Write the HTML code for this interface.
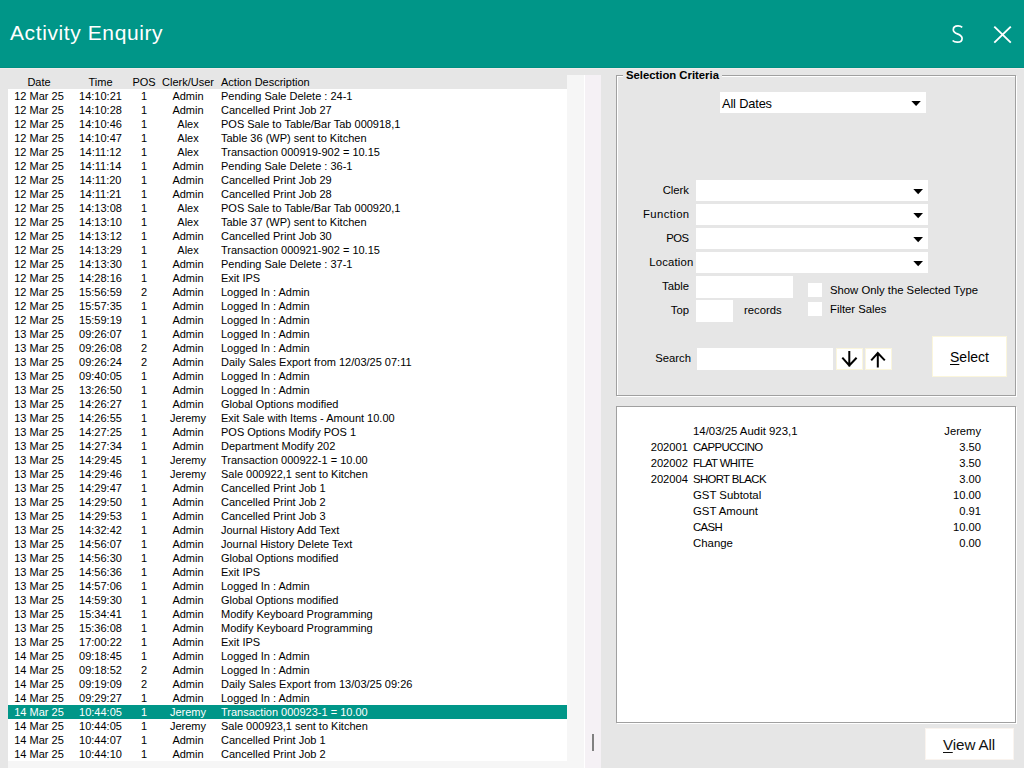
<!DOCTYPE html>
<html><head><meta charset="utf-8">
<style>
*{margin:0;padding:0;box-sizing:border-box}
html,body{width:1024px;height:768px;overflow:hidden;background:#e6e6e6;font-family:"Liberation Sans",sans-serif;color:#000;position:relative}
.abs{position:absolute}
#title{position:absolute;left:0;top:0;width:1024px;height:68px;background:#009688}
#title .t{position:absolute;left:10px;top:17.5px;font-size:21px;letter-spacing:0.6px;line-height:30px;color:#fff;white-space:nowrap}
#tline{position:absolute;left:0;top:67px;width:1024px;height:1px;background:#008f82}
#wline{position:absolute;left:0;top:68px;width:1024px;height:1px;background:#f3eaea}
#vsw{position:absolute;left:584px;top:75px;width:1px;height:693px;background:#fff}
#hdr{position:absolute;left:8px;top:75px;width:559px;height:14px;font-size:11px;line-height:14px;white-space:nowrap}
#list{position:absolute;left:8px;top:89px;width:559px;height:672px;background:#fff;overflow:hidden}
.r{position:absolute;left:0;width:559px;height:14px;font-size:11px;line-height:14px;white-space:nowrap}
.r span,#hdr span{position:absolute;top:0}
.cd{left:0;width:62px;text-align:center}
.ct{left:62px;width:61px;text-align:center}
.cp{left:123px;width:26px;text-align:center}
.cc{left:149px;width:62px;text-align:center}
.ca{left:213px}
.sel{background:#009688;color:#fff}
#vs1{position:absolute;left:567px;top:75px;width:17px;height:693px;background:#f6f6f6}
#vs2{position:absolute;left:585px;top:75px;width:16px;height:693px;background:#f5f1f5}
#hsb{position:absolute;left:8px;top:761px;width:559px;height:7px;background:#f6f6f6}
#thumb{position:absolute;left:592px;top:734px;width:2px;height:17px;background:#808080}
.grp{position:absolute;border:1px solid #a0a0a0;box-shadow:inset 1px 1px 0 #fff, 1px 1px 0 #fff}
.glabel{position:absolute;left:623px;top:69px;padding:0 3px;background:#e6e6e6;font-weight:bold;font-size:11.3px;line-height:13px;white-space:nowrap}
.box{position:absolute;background:#fff}
.tri{position:absolute;width:0;height:0;border-left:5px solid transparent;border-right:5px solid transparent;border-top:6px solid #000}
.lbl{position:absolute;font-size:11.3px;line-height:21px;white-space:nowrap;text-align:right}
.btn{position:absolute;background:#fff;border:1px solid #fbf6dc}
u{text-decoration-thickness:1px;text-underline-offset:2px}
.rc{position:absolute;left:617px;width:398px;height:16px;font-size:11.2px;line-height:16px;white-space:nowrap}
.rc span{position:absolute;top:0}
.rc1{left:0;width:71px;text-align:right}
.rc2{left:76px;font-size:11.4px}
.rc3{right:34px;text-align:right}
</style></head><body>
<div id="title"><div class="t">Activity Enquiry</div>
<svg class="abs" style="left:952px;top:25px" width="12" height="19" viewBox="0 0 12 19"><path d="M10.2 2.4 C9.2 1.4 7.8 0.9 6 0.9 C3.2 0.9 1.3 2.4 1.3 4.7 C1.3 6.9 2.9 7.9 5.4 8.9 C8.4 10.1 10.1 11.2 10.1 13.5 C10.1 15.8 8.1 17.2 5.3 17.2 C3.3 17.2 1.6 16.5 0.6 15.5" stroke="#fff" stroke-width="1.7" fill="none"/></svg>
<svg class="abs" style="left:990px;top:23px" width="24" height="23" viewBox="0 0 24 23"><path d="M4.3 3.6 L20.8 19.6 M20.8 3.6 L4.3 19.6" stroke="#fff" stroke-width="1.9" fill="none"/></svg>
</div>
<div id="hdr"><span class="cd">Date</span><span class="ct">Time</span><span class="cp">POS</span><span class="cc">Clerk/User</span><span class="ca">Action Description</span></div>
<div id="list">
<div class="r" style="top:0px"><span class="cd">12 Mar 25</span><span class="ct">14:10:21</span><span class="cp">1</span><span class="cc">Admin</span><span class="ca">Pending Sale Delete : 24-1</span></div>
<div class="r" style="top:14px"><span class="cd">12 Mar 25</span><span class="ct">14:10:28</span><span class="cp">1</span><span class="cc">Admin</span><span class="ca">Cancelled Print Job 27</span></div>
<div class="r" style="top:28px"><span class="cd">12 Mar 25</span><span class="ct">14:10:46</span><span class="cp">1</span><span class="cc">Alex</span><span class="ca">POS Sale to Table/Bar Tab 000918,1</span></div>
<div class="r" style="top:42px"><span class="cd">12 Mar 25</span><span class="ct">14:10:47</span><span class="cp">1</span><span class="cc">Alex</span><span class="ca">Table 36 (WP) sent to Kitchen</span></div>
<div class="r" style="top:56px"><span class="cd">12 Mar 25</span><span class="ct">14:11:12</span><span class="cp">1</span><span class="cc">Alex</span><span class="ca">Transaction 000919-902 = 10.15</span></div>
<div class="r" style="top:70px"><span class="cd">12 Mar 25</span><span class="ct">14:11:14</span><span class="cp">1</span><span class="cc">Admin</span><span class="ca">Pending Sale Delete : 36-1</span></div>
<div class="r" style="top:84px"><span class="cd">12 Mar 25</span><span class="ct">14:11:20</span><span class="cp">1</span><span class="cc">Admin</span><span class="ca">Cancelled Print Job 29</span></div>
<div class="r" style="top:98px"><span class="cd">12 Mar 25</span><span class="ct">14:11:21</span><span class="cp">1</span><span class="cc">Admin</span><span class="ca">Cancelled Print Job 28</span></div>
<div class="r" style="top:112px"><span class="cd">12 Mar 25</span><span class="ct">14:13:08</span><span class="cp">1</span><span class="cc">Alex</span><span class="ca">POS Sale to Table/Bar Tab 000920,1</span></div>
<div class="r" style="top:126px"><span class="cd">12 Mar 25</span><span class="ct">14:13:10</span><span class="cp">1</span><span class="cc">Alex</span><span class="ca">Table 37 (WP) sent to Kitchen</span></div>
<div class="r" style="top:140px"><span class="cd">12 Mar 25</span><span class="ct">14:13:12</span><span class="cp">1</span><span class="cc">Admin</span><span class="ca">Cancelled Print Job 30</span></div>
<div class="r" style="top:154px"><span class="cd">12 Mar 25</span><span class="ct">14:13:29</span><span class="cp">1</span><span class="cc">Alex</span><span class="ca">Transaction 000921-902 = 10.15</span></div>
<div class="r" style="top:168px"><span class="cd">12 Mar 25</span><span class="ct">14:13:30</span><span class="cp">1</span><span class="cc">Admin</span><span class="ca">Pending Sale Delete : 37-1</span></div>
<div class="r" style="top:182px"><span class="cd">12 Mar 25</span><span class="ct">14:28:16</span><span class="cp">1</span><span class="cc">Admin</span><span class="ca">Exit IPS</span></div>
<div class="r" style="top:196px"><span class="cd">12 Mar 25</span><span class="ct">15:56:59</span><span class="cp">2</span><span class="cc">Admin</span><span class="ca">Logged In : Admin</span></div>
<div class="r" style="top:210px"><span class="cd">12 Mar 25</span><span class="ct">15:57:35</span><span class="cp">1</span><span class="cc">Admin</span><span class="ca">Logged In : Admin</span></div>
<div class="r" style="top:224px"><span class="cd">12 Mar 25</span><span class="ct">15:59:19</span><span class="cp">1</span><span class="cc">Admin</span><span class="ca">Logged In : Admin</span></div>
<div class="r" style="top:238px"><span class="cd">13 Mar 25</span><span class="ct">09:26:07</span><span class="cp">1</span><span class="cc">Admin</span><span class="ca">Logged In : Admin</span></div>
<div class="r" style="top:252px"><span class="cd">13 Mar 25</span><span class="ct">09:26:08</span><span class="cp">2</span><span class="cc">Admin</span><span class="ca">Logged In : Admin</span></div>
<div class="r" style="top:266px"><span class="cd">13 Mar 25</span><span class="ct">09:26:24</span><span class="cp">2</span><span class="cc">Admin</span><span class="ca">Daily Sales Export from 12/03/25 07:11</span></div>
<div class="r" style="top:280px"><span class="cd">13 Mar 25</span><span class="ct">09:40:05</span><span class="cp">1</span><span class="cc">Admin</span><span class="ca">Logged In : Admin</span></div>
<div class="r" style="top:294px"><span class="cd">13 Mar 25</span><span class="ct">13:26:50</span><span class="cp">1</span><span class="cc">Admin</span><span class="ca">Logged In : Admin</span></div>
<div class="r" style="top:308px"><span class="cd">13 Mar 25</span><span class="ct">14:26:27</span><span class="cp">1</span><span class="cc">Admin</span><span class="ca">Global Options modified</span></div>
<div class="r" style="top:322px"><span class="cd">13 Mar 25</span><span class="ct">14:26:55</span><span class="cp">1</span><span class="cc">Jeremy</span><span class="ca">Exit Sale with Items - Amount 10.00</span></div>
<div class="r" style="top:336px"><span class="cd">13 Mar 25</span><span class="ct">14:27:25</span><span class="cp">1</span><span class="cc">Admin</span><span class="ca">POS Options Modify POS 1</span></div>
<div class="r" style="top:350px"><span class="cd">13 Mar 25</span><span class="ct">14:27:34</span><span class="cp">1</span><span class="cc">Admin</span><span class="ca">Department Modify 202</span></div>
<div class="r" style="top:364px"><span class="cd">13 Mar 25</span><span class="ct">14:29:45</span><span class="cp">1</span><span class="cc">Jeremy</span><span class="ca">Transaction 000922-1 = 10.00</span></div>
<div class="r" style="top:378px"><span class="cd">13 Mar 25</span><span class="ct">14:29:46</span><span class="cp">1</span><span class="cc">Jeremy</span><span class="ca">Sale 000922,1 sent to Kitchen</span></div>
<div class="r" style="top:392px"><span class="cd">13 Mar 25</span><span class="ct">14:29:47</span><span class="cp">1</span><span class="cc">Admin</span><span class="ca">Cancelled Print Job 1</span></div>
<div class="r" style="top:406px"><span class="cd">13 Mar 25</span><span class="ct">14:29:50</span><span class="cp">1</span><span class="cc">Admin</span><span class="ca">Cancelled Print Job 2</span></div>
<div class="r" style="top:420px"><span class="cd">13 Mar 25</span><span class="ct">14:29:53</span><span class="cp">1</span><span class="cc">Admin</span><span class="ca">Cancelled Print Job 3</span></div>
<div class="r" style="top:434px"><span class="cd">13 Mar 25</span><span class="ct">14:32:42</span><span class="cp">1</span><span class="cc">Admin</span><span class="ca">Journal History Add Text</span></div>
<div class="r" style="top:448px"><span class="cd">13 Mar 25</span><span class="ct">14:56:07</span><span class="cp">1</span><span class="cc">Admin</span><span class="ca">Journal History Delete Text</span></div>
<div class="r" style="top:462px"><span class="cd">13 Mar 25</span><span class="ct">14:56:30</span><span class="cp">1</span><span class="cc">Admin</span><span class="ca">Global Options modified</span></div>
<div class="r" style="top:476px"><span class="cd">13 Mar 25</span><span class="ct">14:56:36</span><span class="cp">1</span><span class="cc">Admin</span><span class="ca">Exit IPS</span></div>
<div class="r" style="top:490px"><span class="cd">13 Mar 25</span><span class="ct">14:57:06</span><span class="cp">1</span><span class="cc">Admin</span><span class="ca">Logged In : Admin</span></div>
<div class="r" style="top:504px"><span class="cd">13 Mar 25</span><span class="ct">14:59:30</span><span class="cp">1</span><span class="cc">Admin</span><span class="ca">Global Options modified</span></div>
<div class="r" style="top:518px"><span class="cd">13 Mar 25</span><span class="ct">15:34:41</span><span class="cp">1</span><span class="cc">Admin</span><span class="ca">Modify Keyboard Programming</span></div>
<div class="r" style="top:532px"><span class="cd">13 Mar 25</span><span class="ct">15:36:08</span><span class="cp">1</span><span class="cc">Admin</span><span class="ca">Modify Keyboard Programming</span></div>
<div class="r" style="top:546px"><span class="cd">13 Mar 25</span><span class="ct">17:00:22</span><span class="cp">1</span><span class="cc">Admin</span><span class="ca">Exit IPS</span></div>
<div class="r" style="top:560px"><span class="cd">14 Mar 25</span><span class="ct">09:18:45</span><span class="cp">1</span><span class="cc">Admin</span><span class="ca">Logged In : Admin</span></div>
<div class="r" style="top:574px"><span class="cd">14 Mar 25</span><span class="ct">09:18:52</span><span class="cp">2</span><span class="cc">Admin</span><span class="ca">Logged In : Admin</span></div>
<div class="r" style="top:588px"><span class="cd">14 Mar 25</span><span class="ct">09:19:09</span><span class="cp">2</span><span class="cc">Admin</span><span class="ca">Daily Sales Export from 13/03/25 09:26</span></div>
<div class="r" style="top:602px"><span class="cd">14 Mar 25</span><span class="ct">09:29:27</span><span class="cp">1</span><span class="cc">Admin</span><span class="ca">Logged In : Admin</span></div>
<div class="r sel" style="top:616px"><span class="cd">14 Mar 25</span><span class="ct">10:44:05</span><span class="cp">1</span><span class="cc">Jeremy</span><span class="ca">Transaction 000923-1 = 10.00</span></div>
<div class="r" style="top:630px"><span class="cd">14 Mar 25</span><span class="ct">10:44:05</span><span class="cp">1</span><span class="cc">Jeremy</span><span class="ca">Sale 000923,1 sent to Kitchen</span></div>
<div class="r" style="top:644px"><span class="cd">14 Mar 25</span><span class="ct">10:44:07</span><span class="cp">1</span><span class="cc">Admin</span><span class="ca">Cancelled Print Job 1</span></div>
<div class="r" style="top:658px"><span class="cd">14 Mar 25</span><span class="ct">10:44:10</span><span class="cp">1</span><span class="cc">Admin</span><span class="ca">Cancelled Print Job 2</span></div>
</div>
<div id="hsb"></div>
<div id="tline"></div><div id="wline"></div><div id="vsw"></div>
<div id="vs1"></div>
<div id="vs2"></div>
<div id="thumb"></div>

<div class="grp" style="left:616px;top:75px;width:400px;height:321px"></div>
<div class="glabel">Selection Criteria</div>
<div class="box" style="left:720px;top:92px;width:206px;height:21px"><span style="position:absolute;left:2px;top:1px;font-size:12.8px;letter-spacing:-0.15px;line-height:21px">All Dates</span><svg class="abs" style="left:0;top:0" width="206" height="21"><polygon points="191.4,9 200.8,9 196.1,14" fill="#000"/></svg></div>
<div class="lbl" style="left:600px;top:180px;width:89px">Clerk</div>
<div class="lbl" style="left:600px;top:204px;width:89.5px;letter-spacing:0.4px">Function</div>
<div class="lbl" style="left:600px;top:228px;width:88.6px;letter-spacing:-0.5px">POS</div>
<div class="lbl" style="left:600px;top:252px;width:93.5px;letter-spacing:0.2px">Location</div>
<div class="lbl" style="left:600px;top:276px;width:89px">Table</div>
<div class="lbl" style="left:600px;top:300px;width:89px">Top</div>
<div class="box" style="left:696px;top:180px;width:232px;height:21px"><svg class="abs" style="left:0;top:0" width="232" height="21"><polygon points="217.3,9 227,9 222.15,14.2" fill="#000"/></svg></div><div class="box" style="left:696px;top:204px;width:232px;height:21px"><svg class="abs" style="left:0;top:0" width="232" height="21"><polygon points="217.3,9 227,9 222.15,14.2" fill="#000"/></svg></div><div class="box" style="left:696px;top:228px;width:232px;height:21px"><svg class="abs" style="left:0;top:0" width="232" height="21"><polygon points="217.3,9 227,9 222.15,14.2" fill="#000"/></svg></div><div class="box" style="left:696px;top:252px;width:232px;height:21px"><svg class="abs" style="left:0;top:0" width="232" height="21"><polygon points="217.3,9 227,9 222.15,14.2" fill="#000"/></svg></div>
<div class="box" style="left:696px;top:276px;width:97px;height:22px"></div>
<div class="box" style="left:696px;top:300px;width:37px;height:22px"></div>
<div class="lbl" style="left:744px;top:300px;text-align:left">records</div>
<div class="box" style="left:808px;top:283px;width:14px;height:14px"></div>
<div class="box" style="left:808px;top:302px;width:14px;height:14px"></div>
<div class="lbl" style="left:830px;top:280px;text-align:left">Show Only the Selected Type</div>
<div class="lbl" style="left:830px;top:299px;text-align:left">Filter Sales</div>
<div class="lbl" style="left:600px;top:348px;width:91px">Search</div>
<div class="box" style="left:697px;top:348px;width:136px;height:22px"></div>
<div class="btn" style="left:836px;top:348px;width:27px;height:22px"><svg class="abs" style="left:-1px;top:-1px" width="27" height="22"><path d="M13.3 3 V18.5 M6.3 9.7 L13.3 17.5 L20.6 9.7" stroke="#000" stroke-width="2" fill="none"/></svg></div>
<div class="btn" style="left:865px;top:348px;width:27px;height:22px"><svg class="abs" style="left:-1px;top:-1px" width="27" height="22"><path d="M12.8 19.5 V4.5 M6.2 12.4 L12.8 5 L19.8 12.4" stroke="#000" stroke-width="2" fill="none"/></svg></div>
<div class="btn" style="left:932px;top:336px;width:75px;height:41px"><span style="position:absolute;left:17px;top:10px;font-size:14px;line-height:20px;white-space:nowrap"><u>S</u>elect</span></div>

<div class="box" style="left:616px;top:406px;width:400px;height:317px;border:1px solid #a0a0a0;border-right-color:#a0a0a0;box-shadow:1px 1px 0 #fff"></div>
<div class="rc" style="top:423px"><span class="rc1"></span><span class="rc2">14/03/25 Audit 923,1</span><span class="rc3">Jeremy</span></div>
<div class="rc" style="top:439px"><span class="rc1">202001</span><span class="rc2" style="letter-spacing:-0.65px">CAPPUCCINO</span><span class="rc3">3.50</span></div>
<div class="rc" style="top:455px"><span class="rc1">202002</span><span class="rc2" style="letter-spacing:-0.65px">FLAT WHITE</span><span class="rc3">3.50</span></div>
<div class="rc" style="top:471px"><span class="rc1">202004</span><span class="rc2" style="letter-spacing:-0.65px">SHORT BLACK</span><span class="rc3">3.00</span></div>
<div class="rc" style="top:487px"><span class="rc1"></span><span class="rc2">GST Subtotal</span><span class="rc3">10.00</span></div>
<div class="rc" style="top:503px"><span class="rc1"></span><span class="rc2">GST Amount</span><span class="rc3">0.91</span></div>
<div class="rc" style="top:519px"><span class="rc1"></span><span class="rc2" style="letter-spacing:-0.65px">CASH</span><span class="rc3">10.00</span></div>
<div class="rc" style="top:535px"><span class="rc1"></span><span class="rc2">Change</span><span class="rc3">0.00</span></div>
<div class="btn" style="left:925px;top:728px;width:89px;height:32px;border-color:#faf4ef"><span style="position:absolute;left:17px;top:6px;font-size:15.2px;letter-spacing:-0.1px;line-height:20px;white-space:nowrap;color:#111"><u>V</u>iew All</span></div>
</body></html>
